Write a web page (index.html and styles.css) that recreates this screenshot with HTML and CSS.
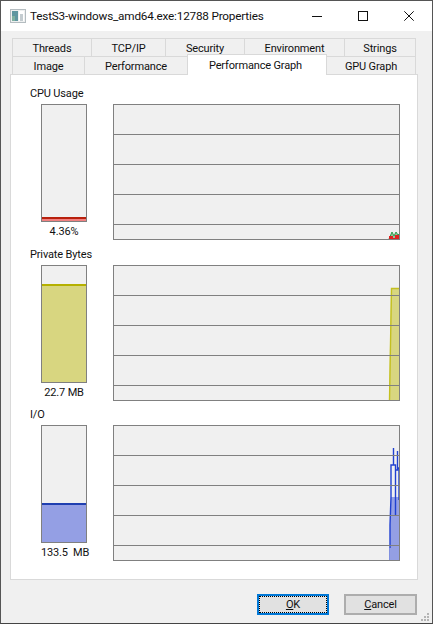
FILE: index.html
```html
<!DOCTYPE html>
<html lang="en">
<head>
<meta charset="utf-8">
<title>TestS3-windows_amd64.exe:12788 Properties</title>
<link rel="stylesheet" href="styles.css">
</head>
<body>
<div class="window">
  <header class="titlebar">
    <svg class="app-icon" width="16" height="14" viewBox="0 0 16 14">
      <rect x="0.5" y="0.5" width="15" height="13" fill="#eef0f0" stroke="#b4bcc0"/>
      <rect x="2" y="2" width="6" height="10" fill="#5f96a0"/>
      <rect x="2" y="7" width="3" height="5" fill="#7fb0a0"/>
      <rect x="9" y="2" width="5" height="10" fill="#fff"/>
      <rect x="10" y="5" width="3" height="7" fill="#c4ccd0"/>
    </svg>
    <span class="title">TestS3-windows_amd64.exe:12788 Properties</span>
    <div class="controls">
      <button class="ctl" aria-label="Minimize"><svg width="10" height="10" viewBox="0 0 10 10"><path d="M0 5.5H10" stroke="#111" fill="none"/></svg></button>
      <button class="ctl" aria-label="Maximize"><svg width="10" height="10" viewBox="0 0 10 10"><rect x=".5" y=".5" width="9" height="9" stroke="#111" fill="none"/></svg></button>
      <button class="ctl" aria-label="Close"><svg width="10" height="10" viewBox="0 0 10 10"><path d="M.3.3 9.7 9.7M9.7.3.3 9.7" stroke="#111" fill="none"/></svg></button>
    </div>
  </header>
  <main class="body">
    <div class="tabs">
      <div class="tabrow">
        <div class="tab w79">Threads</div><div class="tab w74">TCP/IP</div><div class="tab w79">Security</div><div class="tab w100">Environment</div><div class="tab w71">Strings</div>
      </div>
      <div class="tabrow">
        <div class="tab w72">Image</div><div class="tab w103">Performance</div><div class="tab w139 active">Performance Graph</div><div class="tab w89">GPU Graph</div>
      </div>
    </div>
    <section class="panel">
      <div class="group g1">
        <div class="label">CPU Usage</div>
        <div class="content">
          <div class="meter-col">
            <div class="meter"><div class="fill red" style="height:4px"></div></div>
            <div class="value">4.36%</div>
          </div>
          <svg class="graph" width="287" height="136" viewBox="0 0 287 136">
            <path d="M0 30.5H287M0 60.5H287M0 90.5H287M0 120.5H287" class="grid"/>
            <path d="M276 135 279 128 281 132 283 128 285 131 286 130V135Z" fill="#8fc79a" stroke="#2f9a4a"/>
            <path d="M276 135V132H280V134H282V131H286V135Z" fill="#e02020"/>
            <rect x=".5" y=".5" width="286" height="135" class="frame"/>
          </svg>
        </div>
      </div>
      <div class="group g2">
        <div class="label">Private Bytes</div>
        <div class="content">
          <div class="meter-col">
            <div class="meter"><div class="fill yellow" style="height:98px"></div></div>
            <div class="value">22.7 MB</div>
          </div>
          <svg class="graph" width="287" height="136" viewBox="0 0 287 136">
            <path d="M276 135.5 278 23H287V135.5Z" fill="#d8d680"/>
            <path d="M276.5 135.5 278.5 23.5H287" fill="none" stroke="#c4c020" stroke-width="1.4"/>
            <path d="M0 30.5H287M0 60.5H287M0 90.5H287M0 120.5H287" class="grid"/>
            <rect x=".5" y=".5" width="286" height="135" class="frame"/>
          </svg>
        </div>
      </div>
      <div class="group g3">
        <div class="label">I/O</div>
        <div class="content">
          <div class="meter-col">
            <div class="meter"><div class="fill blue" style="height:39px"></div></div>
            <div class="value">133.5&nbsp; MB</div>
          </div>
          <svg class="graph" width="287" height="136" viewBox="0 0 287 136">
            <path d="M277 135V100L278 72H286V135Z" fill="#949fe4"/>
            <path d="M276.5 135V123" fill="none" stroke="#8090e0"/>
            <path d="M277 123V100L278 72V40H280.5V23M280.5 40H282.5V90M282.5 72V45H284.5V26M284.5 43H286V75" fill="none" stroke="#2040d0" stroke-width="1.4"/>
            <path d="M0 30.5H287M0 60.5H287M0 90.5H287M0 120.5H287" class="grid"/>
            <rect x=".5" y=".5" width="286" height="135" class="frame"/>
          </svg>
        </div>
      </div>
    </section>
    <footer class="footer">
      <button class="btn default"><span class="focus"><u>O</u>K</span></button>
      <button class="btn"><span><u>C</u>ancel</span></button>
    </footer>
  </main>
  <svg class="grip" width="8" height="8" viewBox="0 0 8 8" fill="#b4b4b4">
    <rect x="6" y="0" width="2" height="2"/><rect x="3" y="3" width="2" height="2"/><rect x="6" y="3" width="2" height="2"/>
    <rect x="0" y="6" width="2" height="2"/><rect x="3" y="6" width="2" height="2"/><rect x="6" y="6" width="2" height="2"/>
  </svg>
</div>
</body>
</html>
```
FILE: styles.css
```css
* { box-sizing: border-box; }
html, body { margin: 0; height: 100%; }
body { font-family: Roboto, "Noto Sans", sans-serif; font-size: 11px; letter-spacing: -0.15px; color: #111; }
.window {
  position: relative;
  width: 433px;
  height: 624px;
  border: 1px solid #555;
  border-bottom-color: #444;
  display: flex;
  flex-direction: column;
  background: #f0f0f0;
}
.titlebar {
  height: 30px;
  background: #fff;
  display: flex;
  align-items: center;
  padding-left: 9px;
  flex: none;
}
.app-icon { flex: none; }
.title { margin-left: 4px; font-size: 11.75px; letter-spacing: -0.2px; }
.controls { margin-left: auto; display: flex; }
.ctl {
  width: 46px;
  height: 30px;
  padding: 0;
  border: 0;
  background: none;
  display: flex;
  align-items: center;
  justify-content: center;
}
.body { flex: 1; display: flex; flex-direction: column; padding: 7px 14px 0 9px; min-height: 0; }
.tabs { margin-left: 2px; height: 36px; position: relative; z-index: 1; }
.tabrow { display: flex; height: 18px; }
.tab {
  height: 18px;
  background: #f0f0f0;
  border: 1px solid #d9d9d9;
  border-bottom: 0;
  margin-right: -1px;
  text-align: center;
  line-height: 19px;
}
.tab.active {
  background: #fff;
  height: 21px;
  margin-top: -2px;
  padding-right: 3px;
  line-height: 21px;
  border-bottom: 0;
}
.w71 { width: 72px; } .w72 { width: 73px; } .w74 { width: 75px; } .w79 { width: 80px; }
.w89 { width: 90px; } .w100 { width: 101px; } .w103 { width: 104px; } .w139 { width: 140px; }
.panel {
  height: 506px;
  width: 408px;
  background: #fff;
  border: 1px solid #d9d9d9;
  padding: 9px 0 0 19px;
  flex: none;
}
.group { display: flex; flex-direction: column; }
.g1 { height: 161px; }
.g2 { height: 160px; }
.label { height: 20px; line-height: 20px; }
.content { display: flex; align-items: flex-start; margin-left: 11px; }
.meter-col { width: 46px; margin-right: 26px; flex: none; }
.meter {
  height: 118px;
  border: 1px solid #808080;
  background: #f0f0f0;
  display: flex;
  flex-direction: column;
  justify-content: flex-end;
}
.fill { border-top: 2px solid; }
.red { background: #f08080; border-color: #b8200c; }
.yellow { background: #d8d680; border-color: #b5b000; }
.blue { background: #949fe4; border-color: #1f3fb0; }
.value { text-align: center; line-height: 16px; margin-top: 2px; white-space: nowrap; }
.graph { display: block; background: #f0f0f0; flex: none; }
.grid { stroke: #808080; fill: none; }
.frame { stroke: #808080; fill: none; }
.footer { display: flex; justify-content: flex-end; gap: 15px; padding-top: 14px; width: 407px; }
.btn {
  height: 21px;
  width: 73px;
  padding: 0;
  font: inherit;
  letter-spacing: inherit;
  color: #111;
  background: #e1e1e1;
  border: 2px solid #adadad;
  display: flex;
  align-items: stretch;
  justify-content: stretch;
}
.btn span { flex: 1; display: flex; align-items: center; justify-content: center; }
.btn u { text-underline-offset: 1px; }
.btn.default { border-color: #0078d7; width: 72px; }
.focus { outline: 1px dotted #000; outline-offset: -1px; }
.grip { position: absolute; right: 3px; bottom: 2px; }
```
